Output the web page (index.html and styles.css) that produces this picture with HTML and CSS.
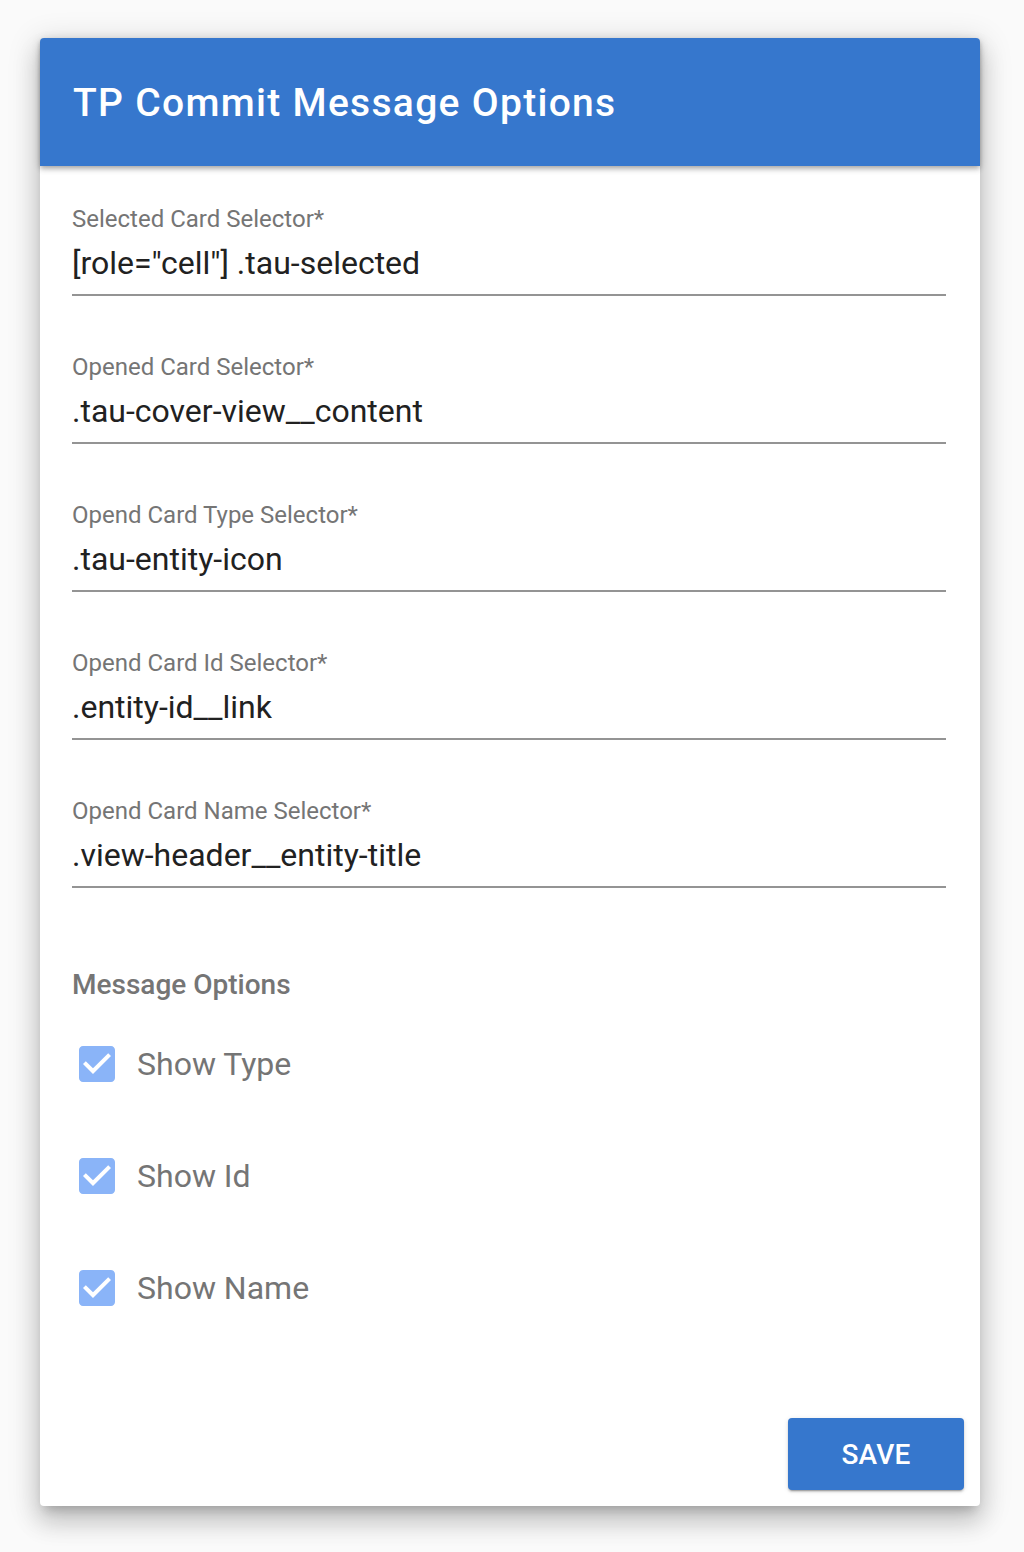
FILE: index.html
```html
<!DOCTYPE html>
<html lang="en">
<head>
<meta charset="utf-8">
<title>TP Commit Message Options</title>
<link rel="stylesheet" href="styles.css">
</head>
<body>
<div class="card">
  <header class="card-header">
    <h1 class="title">TP Commit Message Options</h1>
  </header>
  <div class="card-body">
    <div class="field">
      <label class="field-label">Selected Card Selector*</label>
      <div class="field-input">[role="cell"] .tau-selected</div>
    </div>
    <div class="field">
      <label class="field-label">Opened Card Selector*</label>
      <div class="field-input">.tau-cover-view__content</div>
    </div>
    <div class="field">
      <label class="field-label">Opend Card Type Selector*</label>
      <div class="field-input">.tau-entity-icon</div>
    </div>
    <div class="field">
      <label class="field-label">Opend Card Id Selector*</label>
      <div class="field-input">.entity-id__link</div>
    </div>
    <div class="field">
      <label class="field-label">Opend Card Name Selector*</label>
      <div class="field-input">.view-header__entity-title</div>
    </div>

    <h2 class="subheader">Message Options</h2>

    <div class="checks">
      <div class="check-row">
        <svg class="check-icon" viewBox="3 3 18 18"><path d="M19 3H5c-1.11 0-2 .9-2 2v14c0 1.1.89 2 2 2h14c1.11 0 2-.9 2-2V5c0-1.1-.89-2-2-2zm-9 14l-5-5 1.41-1.41L10 14.17l7.59-7.59L19 8l-9 9z"/></svg>
        <span class="check-label">Show Type</span>
      </div>
      <div class="check-row">
        <svg class="check-icon" viewBox="3 3 18 18"><path d="M19 3H5c-1.11 0-2 .9-2 2v14c0 1.1.89 2 2 2h14c1.11 0 2-.9 2-2V5c0-1.1-.89-2-2-2zm-9 14l-5-5 1.41-1.41L10 14.17l7.59-7.59L19 8l-9 9z"/></svg>
        <span class="check-label">Show Id</span>
      </div>
      <div class="check-row">
        <svg class="check-icon" viewBox="3 3 18 18"><path d="M19 3H5c-1.11 0-2 .9-2 2v14c0 1.1.89 2 2 2h14c1.11 0 2-.9 2-2V5c0-1.1-.89-2-2-2zm-9 14l-5-5 1.41-1.41L10 14.17l7.59-7.59L19 8l-9 9z"/></svg>
        <span class="check-label">Show Name</span>
      </div>
    </div>
  </div>
  <div class="card-actions">
    <button class="btn-save">SAVE</button>
  </div>
</div>
</body>
</html>
```
FILE: styles.css
```css
html, body {
  margin: 0;
  padding: 0;
}
body {
  background: #fafafa;
  padding: 38px 44px 46px 40px;
  font-family: Roboto, "Liberation Sans", Arial, sans-serif;
}
.card {
  background: #fff;
  border-radius: 4px;
  box-shadow: 0 8px 10px -5px rgba(0,0,0,.2), 0 16px 24px 2px rgba(0,0,0,.14), 0 6px 30px 5px rgba(0,0,0,.12);
  display: flex;
  flex-direction: column;
}
.card-header {
  position: relative;
  z-index: 1;
  height: 128px;
  background: #3677cd;
  border-radius: 4px 4px 0 0;
  display: flex;
  align-items: center;
  padding: 2px 33px 0;
  box-sizing: border-box;
  box-shadow: 0 2px 4px -1px rgba(0,0,0,.2), 0 4px 5px 0 rgba(0,0,0,.14), 0 1px 10px 0 rgba(0,0,0,.12);
}
.title {
  margin: 0;
  color: #fff;
  font-size: 39px;
  font-weight: 500;
  letter-spacing: 1.3px;
}
.card-body {
  padding: 37px 34px 0 32px;
}
.field {
  margin-bottom: 55px;
  border-bottom: 2px solid #949494;
}
.field-label {
  display: block;
  font-size: 24px;
  line-height: 32px;
  color: #757575;
  margin-bottom: 8px;
}
.field-input {
  font-size: 32px;
  line-height: 40px;
  color: #212121;
  padding-bottom: 11px;
}
.subheader {
  margin: 81px 0 0;
  font-size: 28px;
  line-height: 32px;
  font-weight: 500;
  color: #757575;
}
.checks {
  display: flex;
  flex-direction: column;
  gap: 76px;
  margin-top: 45px;
  padding-left: 7px;
}
.check-row {
  display: flex;
  align-items: center;
  height: 36px;
}
.check-icon {
  width: 36px;
  height: 36px;
  fill: #8ab4f8;
  flex: none;
}
.check-label {
  margin-left: 22px;
  font-size: 32px;
  color: #757575;
}
.card-actions {
  display: flex;
  justify-content: flex-end;
  padding: 112px 16px 16px;
}
.btn-save {
  width: 176px;
  height: 72px;
  border: none;
  border-radius: 4px;
  background: #3677cd;
  color: #fff;
  font-family: Roboto, "Liberation Sans", Arial, sans-serif;
  font-size: 28px;
  font-weight: 500;
  letter-spacing: 0.2px;
  box-shadow: 0 3px 1px -2px rgba(0,0,0,.2), 0 2px 2px 0 rgba(0,0,0,.14), 0 1px 5px 0 rgba(0,0,0,.12);
}
```
